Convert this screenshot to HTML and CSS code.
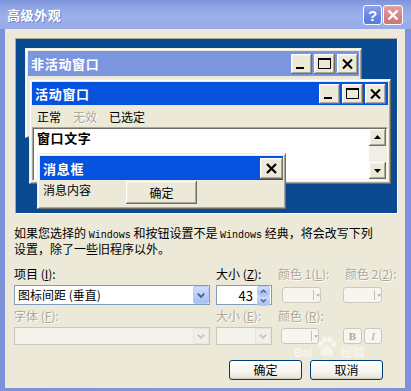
FILE: index.html
```html
<!DOCTYPE html>
<html lang="zh-CN">
<head>
<meta charset="utf-8">
<title>高级外观</title>
<link rel="stylesheet" href="styles.css">
</head>
<body>
<div class="win">
  <div class="titlebar">
    <span class="title">高级外观</span>
    <div class="tbtns">
      <span class="tb help">?</span>
      <span class="tb tclose"><svg viewBox="0 0 20 20" width="20" height="20"><path d="M5.5 5.5l9 9M14.5 5.5l-9 9" stroke="#fff" stroke-width="2.4" fill="none"/></svg></span>
    </div>
  </div>
  <div class="client">
    <div class="preview">
      <div class="pw inactive">
        <div class="ptitle ititle">
          <span class="ptext">非活动窗口</span>
          <div class="cbtns">
            <span class="cb"><svg viewBox="0 0 21 20" width="21" height="20"><rect x="5" y="13" width="8" height="2"/></svg></span>
            <span class="cb"><svg viewBox="0 0 21 20" width="21" height="20"><path d="M4.5 4.5h12v10h-12z" fill="none" stroke="#000"/><rect x="4" y="4" width="13" height="2"/></svg></span>
            <span class="cb"><svg viewBox="0 0 21 20" width="21" height="20"><path d="M6 5.5l9 9M15 5.5l-9 9" stroke="#000" stroke-width="2" fill="none"/></svg></span>
          </div>
        </div>
      </div>
      <div class="pw active">
        <div class="ptitle atitle">
          <span class="ptext">活动窗口</span>
          <div class="cbtns">
            <span class="cb"><svg viewBox="0 0 21 20" width="21" height="20"><rect x="5" y="13" width="8" height="2"/></svg></span>
            <span class="cb"><svg viewBox="0 0 21 20" width="21" height="20"><path d="M4.5 4.5h12v10h-12z" fill="none" stroke="#000"/><rect x="4" y="4" width="13" height="2"/></svg></span>
            <span class="cb"><svg viewBox="0 0 21 20" width="21" height="20"><path d="M6 5.5l9 9M15 5.5l-9 9" stroke="#000" stroke-width="2" fill="none"/></svg></span>
          </div>
        </div>
        <div class="menubar">
          <span>正常</span><span class="dis">无效</span><span>已选定</span>
        </div>
        <div class="textarea">
          <div class="txt">窗口文字</div>
          <div class="sb">
            <span class="sbb"><svg viewBox="0 0 15 15" width="15" height="15"><path d="M4 9h7l-3.5-4z"/></svg></span>
            <span class="track"></span>
            <span class="sbb"><svg viewBox="0 0 15 15" width="15" height="15"><path d="M4 6h7l-3.5 4z"/></svg></span>
          </div>
        </div>
      </div>
      <div class="pw msg">
        <div class="ptitle mtitle">
          <span class="ptext">消息框</span>
          <span class="cb big"><svg viewBox="0 0 23 21" width="23" height="21"><path d="M7 6l9 9M16 6l-9 9" stroke="#000" stroke-width="2.2" fill="none"/></svg></span>
        </div>
        <div class="msgbody">
          <span class="msgtext">消息内容</span>
          <span class="okbtn">确定</span>
        </div>
      </div>
    </div>

    <p class="note">如果您选择的 <span class="mono">Windows</span> 和按钮设置不是 <span class="mono">Windows</span> 经典，将会改写下列<br>设置，除了一些旧程序以外。</p>

    <div class="form">
      <span class="lbl">项目 (<u>I</u>):</span>
      <span class="lbl">大小 (<u>Z</u>):</span>
      <span class="lbl dis">颜色 1(<u>L</u>):</span>
      <span class="lbl dis c4">颜色 2(<u>2</u>):</span>

      <div class="combo">
        <span class="ctext">图标间距 (垂直)</span>
        <span class="dd"><svg viewBox="0 0 15 15" width="15" height="15"><path d="M4 5.5l3.5 3.5 3.5-3.5" stroke="#4D6185" stroke-width="2" fill="none"/></svg></span>
      </div>
      <div class="spin">
        <span class="stext">43</span>
        <span class="sbtns">
          <span class="sp"><svg viewBox="0 0 13 8" width="13" height="8"><path d="M3.5 6l3-3 3 3" stroke="#4D6185" stroke-width="1.6" fill="none"/></svg></span>
          <span class="sp"><svg viewBox="0 0 13 8" width="13" height="8"><path d="M3.5 2l3 3 3-3" stroke="#4D6185" stroke-width="1.6" fill="none"/></svg></span>
        </span>
      </div>
      <span class="colbtn c3b"><span class="sep"></span><svg viewBox="0 0 5 3" width="5" height="3"><path d="M0 0h5l-2.5 3z" fill="#B5B2A4"/></svg></span>
      <span class="colbtn c4b"><span class="sep"></span><svg viewBox="0 0 5 3" width="5" height="3"><path d="M0 0h5l-2.5 3z" fill="#B5B2A4"/></svg></span>

      <span class="lbl dis">字体 (<u>F</u>):</span>
      <span class="lbl dis">大小 (<u>E</u>):</span>
      <span class="lbl dis">颜色 (<u>R</u>):</span>
      <span></span>

      <div class="combo disc">
        <span class="dd ddd"><svg viewBox="0 0 15 15" width="15" height="15"><path d="M4 5.5l3.5 3.5 3.5-3.5" stroke="#C9C7BA" stroke-width="2" fill="none"/></svg></span>
      </div>
      <div class="combo disc">
        <span class="dd ddd"><svg viewBox="0 0 15 15" width="15" height="15"><path d="M4 5.5l3.5 3.5 3.5-3.5" stroke="#C9C7BA" stroke-width="2" fill="none"/></svg></span>
      </div>
      <span class="colbtn c3r"><span class="sep"></span><svg viewBox="0 0 5 3" width="5" height="3"><path d="M0 0h5l-2.5 3z" fill="#B5B2A4"/></svg></span>
      <div class="bi">
        <span class="fbtn bold">B</span>
        <span class="fbtn ital">I</span>
      </div>
    </div>

    <div class="actions">
      <span class="xpbtn">确定</span>
      <span class="xpbtn">取消</span>
    </div>
  </div>
  <div class="watermark">
    <span class="wm-text">Bai</span>
    <svg class="paw" viewBox="0 0 24 24" width="22" height="22"><g fill="#fff"><ellipse cx="5" cy="10" rx="2.6" ry="3.2"/><ellipse cx="9.5" cy="5" rx="2.6" ry="3.2"/><ellipse cx="15" cy="5" rx="2.6" ry="3.2"/><ellipse cx="19.5" cy="10" rx="2.6" ry="3.2"/><path d="M12 11c-3 0-7 6-7 9 0 2 2 3 4 2.5 1-.3 2-.5 3-.5s2 .2 3 .5c2 .5 4-.5 4-2.5 0-3-4-9-7-9z"/></g></svg>
    <span class="wm-text">经验</span>
  </div>
</div>
</body>
</html>
```

FILE: styles.css
```css
* { box-sizing: border-box; }

body {
  margin: 0;
  width: 411px;
  height: 391px;
  overflow: hidden;
  font-family: "Noto Sans CJK SC", "Liberation Sans", sans-serif;
  font-size: 12px;
  color: #000;
}

.win {
  position: relative;
  width: 411px;
  height: 391px;
  display: flex;
  flex-direction: column;
  background: linear-gradient(90deg, #7D91D9 0%, #8397DC 50%, #7E92DA 100%);
}

.titlebar {
  height: 29px;
  flex: none;
  display: flex;
  align-items: center;
  padding: 0 8px 0 7px;
  background: linear-gradient(180deg, #7C93DA 0%, #8EA4E4 25%, #9CB0EA 60%, #97AAE7 100%);
}

.title {
  color: #fff;
  font-weight: bold;
  font-size: 13px;
  letter-spacing: 0.6px;
  line-height: 1;
  text-shadow: 1px 1px 0 #6E82CC;
}

.tbtns {
  margin-left: auto;
  display: flex;
  gap: 1px;
  margin-top: 1px;
}

.tb {
  width: 20px;
  height: 20px;
  border: 1px solid #fff;
  border-radius: 3px;
  display: flex;
  align-items: center;
  justify-content: center;
  color: #fff;
  font-family: "Liberation Sans", sans-serif;
  font-weight: bold;
  font-size: 15px;
  line-height: 1;
}

.tb svg { display: block; margin: -1px; }

.help {
  width: 19px;
  background: linear-gradient(180deg, #8AA3EC 0%, #6585E0 60%, #5C7CD9 100%);
}

.tclose {
  background: linear-gradient(180deg, #E3A0A0 0%, #D68385 60%, #CC7477 100%);
}

.client {
  flex: 1;
  margin: 0 6px 3px 5px;
  background: #ECE9D8;
  padding: 9px 0 0 9px;
}

/* ---------- preview canvas ---------- */
.preview {
  position: relative;
  width: 383px;
  height: 176px;
  margin-left: 1px;
  background: #0A4A90;
  border: 1px solid;
  border-color: #ACA899 #FFFFFF #FFFFFF #ACA899;
  overflow: hidden;
}

.pw {
  position: absolute;
  background: #ECE9D8;
  padding: 2px;
  border: 1px solid;
  border-color: #F1EFE2 #716F64 #716F64 #F1EFE2;
  box-shadow: inset 1px 1px 0 #fff, inset -1px -1px 0 #ACA899;
  display: flex;
  flex-direction: column;
}

.inactive { left: 9px; top: 9px; width: 337px; height: 90px; }
.active { left: 13px; top: 40px; width: 362px; height: 105px; }
.msg { left: 21px; top: 114px; width: 249px; height: 56px; }

.ptitle {
  display: flex;
  align-items: center;
  padding-left: 3px;
  flex: none;
}

.ititle { height: 25px; background: #7B95DE; padding-right: 1px; }
.atitle { height: 23px; background: #0552DF; padding-right: 2px; }
.mtitle { height: 24px; background: #0552DF; padding-right: 0; }

.ptext {
  color: #fff;
  font-weight: bold;
  font-size: 13px;
  letter-spacing: 0.7px;
  line-height: 1;
}

.cbtns {
  margin-left: auto;
  display: flex;
  gap: 2px;
}

.cb {
  width: 21px;
  height: 20px;
  background: #ECE9D8;
  box-shadow: inset -1px -1px 0 #716F64, inset 1px 1px 0 #fff, inset -2px -2px 0 #ACA899, inset 2px 2px 0 #F1EFE2;
  display: block;
}

.cb svg { display: block; }

.cb.big { width: 23px; height: 21px; margin-left: auto; }

.menubar {
  height: 22px;
  display: flex;
  align-items: center;
  gap: 12px;
  padding-left: 5px;
  flex: none;
  font-size: 12px;
}

.dis { color: #ACA899; text-shadow: 1px 1px 0 #fff; }

.textarea {
  flex: 1;
  display: flex;
  background: #fff;
  border: 1px solid;
  border-color: #ACA899 #fff #fff #ACA899;
  box-shadow: inset 1px 1px 0 #716F64, inset -1px -1px 0 #F1EFE2;
  padding: 1px 1px 1px 1px;
}

.txt {
  flex: 1;
  font-weight: bold;
  font-size: 13px;
  letter-spacing: 0.6px;
  padding: 1px 0 0 3px;
  line-height: 16px;
}

.sb {
  width: 17px;
  display: flex;
  flex-direction: column;
}

.sbb {
  height: 17px;
  background: #ECE9D8;
  box-shadow: inset -1px -1px 0 #716F64, inset 1px 1px 0 #fff, inset -2px -2px 0 #ACA899, inset 2px 2px 0 #F1EFE2;
  display: flex;
  align-items: center;
  justify-content: center;
}

.sbb svg { display: block; }

.track {
  flex: 1;
  background: #F0EFE7;
}

.msgbody {
  flex: 1;
  display: flex;
  align-items: flex-start;
}

.msgtext {
  padding: 3px 0 0 3px;
  line-height: 14px;
}

.okbtn {
  margin-left: 35px;
  margin-top: 1px;
  width: 71px;
  height: 23px;
  background: #ECE9D8;
  box-shadow: inset -1px -1px 0 #716F64, inset 1px 1px 0 #fff, inset -2px -2px 0 #ACA899, inset 2px 2px 0 #F1EFE2;
  display: flex;
  align-items: center;
  justify-content: center;
}

/* ---------- text ---------- */
.note {
  margin: 12px 0 0 0;
  line-height: 13px;
  font-size: 12px;
  white-space: nowrap;
}

.mono {
  font-family: "Liberation Mono", monospace;
  font-size: 10px;
}

/* ---------- form ---------- */
.form {
  margin-top: 12px;
  display: grid;
  grid-template-columns: 196px 56px 59px 39px;
  grid-template-rows: 14px 20px 14px 18px;
  column-gap: 6px;
  row-gap: 4px;
}

.lbl {
  line-height: 14px;
  white-space: nowrap;
  font-size: 12px;
}

.lbl u { text-underline-offset: 1px; }

.c4 { margin-left: 2px; }

.combo {
  border: 1px solid #7F9DB9;
  background: #fff;
  display: flex;
  align-items: center;
  padding-left: 3px;
}

.ctext { font-size: 12px; line-height: 1; }

.dd {
  margin-left: auto;
  width: 16px;
  height: 100%;
  border: 1px solid #B7CAF5;
  border-radius: 2px;
  background: linear-gradient(180deg, #D2DFFD 0%, #B8CCF8 50%, #A8C0F4 100%);
  display: flex;
  align-items: center;
  justify-content: center;
}

.dd svg { display: block; }

.disc {
  border-color: #C9C7BA;
  background: #F3F2EB;
}

.ddd {
  border-color: #E8E6DC;
  background: #F0EFE8;
}

.spin {
  border: 1px solid #7F9DB9;
  background: #fff;
  display: flex;
  align-items: center;
}

.stext {
  flex: 1;
  text-align: right;
  padding-right: 4px;
  font-size: 13px;
  line-height: 1;
}

.sbtns {
  width: 14px;
  height: 100%;
  display: flex;
  flex-direction: column;
  gap: 0;
  padding: 0 1px 0 0;
}

.sp {
  flex: 1;
  border: 1px solid #B7CAF5;
  border-radius: 2px;
  background: linear-gradient(180deg, #D2DFFD 0%, #B8CCF8 50%, #A8C0F4 100%);
  display: flex;
  align-items: center;
  justify-content: center;
}

.sp svg { display: block; }

.colbtn {
  align-self: center;
  width: 39px;
  height: 16px;
  border: 1px solid #CBC9BC;
  border-radius: 3px;
  background: #F6F5EF;
  display: flex;
  align-items: center;
  padding-left: 30px;
  gap: 2px;
}

.colbtn svg { display: block; }

.sep {
  width: 1px;
  height: 10px;
  background: #C5C2B4;
}

.c3b { margin-left: 4px; }
.c4b { margin-left: 0; }
.c3r { margin-left: 3px; width: 38px; padding-left: 29px; }

.bi {
  display: flex;
  gap: 2px;
  align-items: center;
}

.fbtn {
  width: 19px;
  height: 16px;
  border: 1px solid #CBC9BC;
  border-radius: 3px;
  background: #F6F5EF;
  display: flex;
  align-items: center;
  justify-content: center;
  font-family: "Liberation Serif", serif;
  font-size: 11px;
  color: #ACA899;
  line-height: 1;
}

.fbtn.bold { font-weight: bold; }
.fbtn.ital { font-style: italic; width: 18px; }

/* ---------- actions ---------- */
.actions {
  margin-top: 15px;
  display: flex;
  justify-content: flex-end;
  gap: 8px;
  padding-right: 22px;
}

.xpbtn {
  width: 73px;
  height: 20px;
  border: 1px solid #003C74;
  border-radius: 3px;
  background: linear-gradient(180deg, #FFFFFF 0%, #F5F4EF 60%, #E3E0D6 100%);
  box-shadow: inset 0 -1px 0 #D6D0C5;
  display: flex;
  align-items: center;
  justify-content: center;
  font-size: 12px;
  line-height: 1;
}

/* ---------- watermark overlay ---------- */
.watermark {
  position: absolute;
  left: 294px;
  top: 335px;
  display: flex;
  align-items: flex-start;
  gap: 3px;
  opacity: 0.55;
  pointer-events: none;
}

.wm-text {
  color: #fff;
  font-family: "Liberation Sans", "Noto Sans CJK SC", sans-serif;
  font-weight: bold;
  font-size: 12px;
  line-height: 1;
  margin-top: 12px;
}

.paw { display: block; }
```
